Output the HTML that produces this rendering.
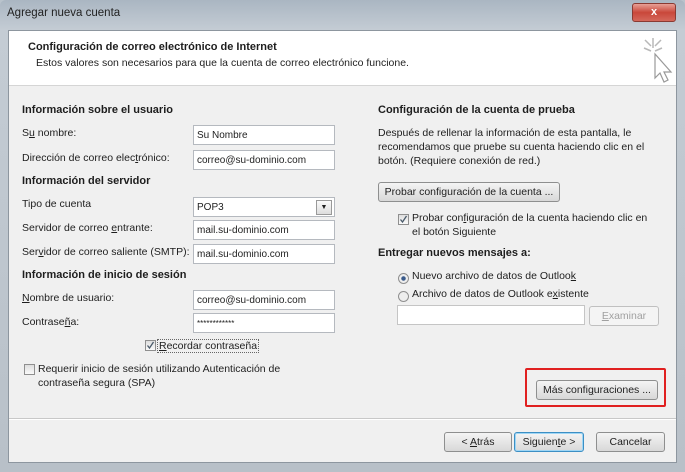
<!DOCTYPE html>
<html><head><meta charset="utf-8"><style>
*{margin:0;padding:0;box-sizing:border-box}
body{width:685px;height:472px;overflow:hidden;background:#b9c3cc;font-family:"Liberation Sans",sans-serif;font-size:10.5px;color:#1e1e1e;position:relative}
.a{position:absolute;white-space:nowrap}
.frame{position:absolute;left:0;top:0;width:685px;height:472px;background:linear-gradient(#aab6c2,#c4ccd4 30px,#b8c0c8);border-radius:6px 6px 0 0}
.b{font-weight:bold;font-size:11px}
.in{position:absolute;background:#fff;border:1px solid #b5b9bf;height:20px;padding:4px 3px;font-size:10px;color:#222}
.btn{position:absolute;border:1px solid #8e8f8f;border-radius:3px;background:linear-gradient(#f4f4f4,#e6e6e6 50%,#d8d8d8);text-align:center;font-size:10.5px;line-height:18px}
.cb{position:absolute;width:11px;height:11px;border:1px solid #8f8f8f;background:linear-gradient(#dedede,#fafafa)}
.cb svg{position:absolute;left:0;top:0}
.rd{position:absolute;width:11px;height:11px;border:1px solid #8f8f8f;border-radius:50%;background:#eee}
u{text-decoration:underline}
</style></head><body>
<div class="frame"></div>
<div class="a" style="left:7px;top:7px;font-size:11.5px;color:#222">Agregar nueva cuenta</div>
<div class="a" style="left:632px;top:3px;width:44px;height:19px;border-radius:3px;border:1px solid #8a3a32;background:linear-gradient(#e8a096,#c9473a 50%,#d4685b);color:#fff;font-weight:bold;text-align:center;line-height:16px;font-size:11px">x</div>
<div class="a" style="left:8px;top:30px;width:669px;height:433px;background:#f0f0f0;border:1px solid #8d969f"></div>
<div class="a" style="left:9px;top:31px;width:667px;height:55px;background:#fff;border-bottom:1px solid #d5d5d5"></div>
<div class="a b" style="left:28px;top:41px">Configuración de correo electrónico de Internet</div>
<div class="a" style="left:36px;top:57px;font-size:10.5px">Estos valores son necesarios para que la cuenta de correo electrónico funcione.</div>
<svg class="a" style="left:640px;top:36px" width="40" height="48" viewBox="0 0 40 48"><g stroke="#b8b8b8" stroke-width="1.5"><line x1="13" y1="2" x2="13" y2="12"/><line x1="4" y1="12" x2="11" y2="15"/><line x1="22" y1="12" x2="15" y2="15"/><line x1="5" y1="4" x2="11" y2="10"/><line x1="21" y1="4" x2="15" y2="10"/></g><path d="M15 18 L15 42 L20 37 L24 46 L28 44 L24 36 L31 36 Z" fill="#fff" stroke="#999" stroke-width="1.2"/></svg>

<div class="a b" style="left:22px;top:104px">Información sobre el usuario</div>
<div class="a" style="left:22px;top:127px">S<u>u</u> nombre:</div>
<div class="in" style="left:193px;top:125px;width:142px">Su Nombre</div>
<div class="a" style="left:22px;top:152px">Dirección de correo elec<u>t</u>rónico:</div>
<div class="in" style="left:193px;top:150px;width:142px">correo@su-dominio.com</div>
<div class="a b" style="left:22px;top:175px">Información del servidor</div>
<div class="a" style="left:22px;top:198px">Tipo de cuenta</div>
<div class="in" style="left:193px;top:197px;width:142px">POP3</div>
<div class="a" style="left:316px;top:200px;width:16px;height:15px;border:1px solid #999;background:linear-gradient(#fafafa,#ddd);font-size:7px;text-align:center;line-height:13px">▼</div>
<div class="a" style="left:22px;top:222px">Servidor de correo <u>e</u>ntrante:</div>
<div class="in" style="left:193px;top:220px;width:142px">mail.su-dominio.com</div>
<div class="a" style="left:22px;top:246px">Ser<u>v</u>idor de correo saliente (SMTP):</div>
<div class="in" style="left:193px;top:244px;width:142px">mail.su-dominio.com</div>
<div class="a b" style="left:22px;top:269px">Información de inicio de sesión</div>
<div class="a" style="left:22px;top:292px"><u>N</u>ombre de usuario:</div>
<div class="in" style="left:193px;top:290px;width:142px">correo@su-dominio.com</div>
<div class="a" style="left:22px;top:316px">Contrase<u>ñ</u>a:</div>
<div class="in" style="left:193px;top:313px;width:142px;font-size:8px;padding-top:5px">************</div>
<div class="cb" style="left:145px;top:340px"><svg width="9" height="9" viewBox="0 0 9 9"><path d="M1.5 4.5 L3.5 7 L7.5 1" fill="none" stroke="#4a5a6a" stroke-width="1.3"/></svg></div>
<div class="a" style="left:157px;top:339px;border:1px dotted #666;padding:0 1px"><u>R</u>ecordar contraseña</div>
<div class="cb" style="left:24px;top:364px"></div>
<div class="a" style="left:38px;top:362px;line-height:14px">Requerir inicio de sesión utilizando Autenticación de<br>contraseña segura (SPA)</div>

<div class="a b" style="left:378px;top:104px">Configuración de la cuenta de prueba</div>
<div class="a" style="left:378px;top:126px;line-height:14px">Después de rellenar la información de esta pantalla, le<br>recomendamos que pruebe su cuenta haciendo clic en el<br>botón. (Requiere conexión de red.)</div>
<div class="btn" style="left:378px;top:182px;width:182px;height:20px">Probar configuración de la cuenta ...</div>
<div class="cb" style="left:398px;top:214px"><svg width="9" height="9" viewBox="0 0 9 9"><path d="M1.5 4.5 L3.5 7 L7.5 1" fill="none" stroke="#4a5a6a" stroke-width="1.3"/></svg></div>
<div class="a" style="left:412px;top:211px;line-height:14px">Probar con<u>f</u>iguración de la cuenta haciendo clic en<br>el botón Siguiente</div>
<div class="a b" style="left:378px;top:247px">Entregar nuevos mensajes a:</div>
<div class="rd" style="left:398px;top:273px;background:radial-gradient(#3a5a8a 30%,#eee 40%)"></div>
<div class="a" style="left:412px;top:270px">Nuevo archivo de datos de Outloo<u>k</u></div>
<div class="rd" style="left:398px;top:291px"></div>
<div class="a" style="left:412px;top:288px">Archivo de datos de Outlook e<u>x</u>istente</div>
<div class="in" style="left:397px;top:305px;width:188px;border-color:#c5c5c5"></div>
<div class="btn" style="left:589px;top:306px;width:70px;height:20px;color:#a0a0a0;border-color:#c0c0c0;background:#f4f4f4"><u>E</u>xaminar</div>

<div class="a" style="left:525px;top:368px;width:141px;height:39px;border:2px solid #e02020;border-radius:2px"></div>
<div class="btn" style="left:536px;top:380px;width:122px;height:20px">Más confi<u>g</u>uraciones ...</div>

<div class="a" style="left:9px;top:418px;width:667px;height:2px;border-top:1px solid #c8c8c8;border-bottom:1px solid #fff"></div>
<div class="btn" style="left:444px;top:432px;width:68px;height:20px">&lt; <u>A</u>trás</div>
<div class="btn" style="left:514px;top:432px;width:70px;height:20px;border-color:#3c8fc4;box-shadow:inset 0 0 0 1px #9fd6f5">Siguien<u>t</u>e &gt;</div>
<div class="btn" style="left:596px;top:432px;width:69px;height:20px">Cancelar</div>
</body></html>
